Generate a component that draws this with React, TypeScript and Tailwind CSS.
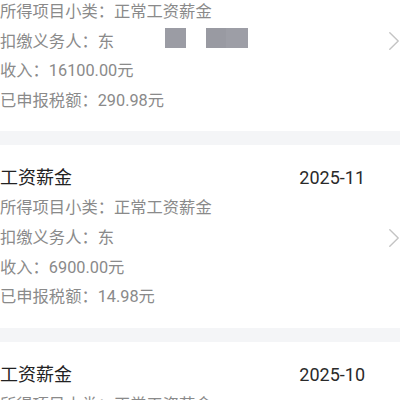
type Record = {
  title: string;
  month: string;
  subType: string;
  income?: string;
  tax?: string;
  redacted?: boolean;
};

const records: Record[] = [
  { title: "工资薪金", month: "2025-12", subType: "正常工资薪金", income: "16100.00元", tax: "290.98元", redacted: true },
  { title: "工资薪金", month: "2025-11", subType: "正常工资薪金", income: "6900.00元", tax: "14.98元" },
  { title: "工资薪金", month: "2025-10", subType: "正常工资薪金", income: "8200.00元", tax: "54.98元" },
];

const font = "font-['Roboto','Noto_Sans_CJK_SC',sans-serif]";

const Chevron = () => (
  <svg width="10" height="18" viewBox="0 0 10 18" fill="none">
    <polyline points="0.8,0.8 9.2,9 0.8,17.2" stroke="#c4c4c4" strokeWidth="1.4" strokeLinecap="round" strokeLinejoin="round" />
  </svg>
);

const RecordCard = ({ item }: { item: Record }) => (
  <div className="flex bg-white pt-[18px] pb-[16px]">
    <div className="w-[365px] shrink-0">
      <div className="flex justify-between text-[18px] leading-[30px] text-[#222222]">
        <span>{item.title}</span>
        <span className="text-[#2a2a2a]">{item.month}</span>
      </div>
      <div className="text-[16.3px] leading-[29.6px] text-[#8a8a8a]">
        <div>所得项目小类：{item.subType}</div>
        <div className="flex items-start">
          <span>扣缴义务人：东</span>
          {item.redacted && (
            <>
              <span className="ml-[51px] mt-[1px] h-[20px] w-[21px] bg-[#9b9ca4]"></span>
              <span className="ml-[20px] mt-[1px] flex h-[20px] w-[42px]">
                <span className="h-full w-[20px] bg-[#999aa2]"></span>
                <span className="h-full w-[22px] bg-[#9d9ea6]"></span>
              </span>
            </>
          )}
        </div>
        <div>收入：{item.income}</div>
        <div>已申报税额：{item.tax}</div>
      </div>
    </div>
    <div className="flex flex-1 items-center justify-end pr-[1px]">
      <Chevron />
    </div>
  </div>
);

export default function App() {
  return (
    <div className={`h-[400px] w-[400px] overflow-hidden bg-white ${font}`}>
      <div className="-mt-[51px] flex flex-col">
        {records.map((item, i) => (
          <div key={i}>
            {i > 0 && <div className="h-[14px] bg-[#f4f5f7]"></div>}
            <RecordCard item={item} />
          </div>
        ))}
      </div>
    </div>
  );
}
